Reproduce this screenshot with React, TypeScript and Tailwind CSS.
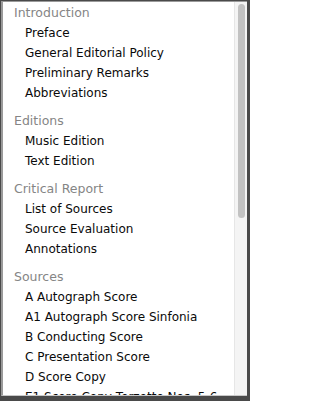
import React from 'react'

const sections = [
  { title: 'Introduction', items: ['Preface', 'General Editorial Policy', 'Preliminary Remarks', 'Abbreviations'] },
  { title: 'Editions', items: ['Music Edition', 'Text Edition'] },
  { title: 'Critical Report', items: ['List of Sources', 'Source Evaluation', 'Annotations'] },
  {
    title: 'Sources',
    items: [
      'A Autograph Score',
      'A1 Autograph Score Sinfonia',
      'B Conducting Score',
      'C Presentation Score',
      'D Score Copy',
      'E1 Score Copy Terzetto Nos. 5-6',
    ],
  },
]

export default function App() {
  return (
    <div className="w-[250px] h-[401px] bg-[#4a4a4a] pl-[1px] pt-[1px] pr-[3px] pb-[5px]">
      <div className="flex h-full bg-white border-l-2 border-t border-b border-[#9a9a9a] border-b-[#c8c8c8] overflow-hidden">
        <div className="flex-1 overflow-hidden pl-[11px] pt-[1px] font-['DejaVu_Sans',sans-serif] text-[12px]">
          {sections.map((s) => (
            <div key={s.title} className="mb-[8px]">
              <div className="h-[20px] leading-[20px] text-[12.5px] text-[#858585]">{s.title}</div>
              {s.items.map((item) => (
                <div key={item} className="h-[20px] leading-[20px] pl-[11px] text-[#0a0a0a] whitespace-nowrap">
                  {item}
                </div>
              ))}
            </div>
          ))}
        </div>
        <div className="w-[13px] bg-[#f4f4f4] border-l border-[#e6e6e6] pl-[3px] pr-[2px] pt-[2px]">
          <div className="h-[214px] rounded-full bg-[#c2c2c2]" />
        </div>
      </div>
    </div>
  )
}
